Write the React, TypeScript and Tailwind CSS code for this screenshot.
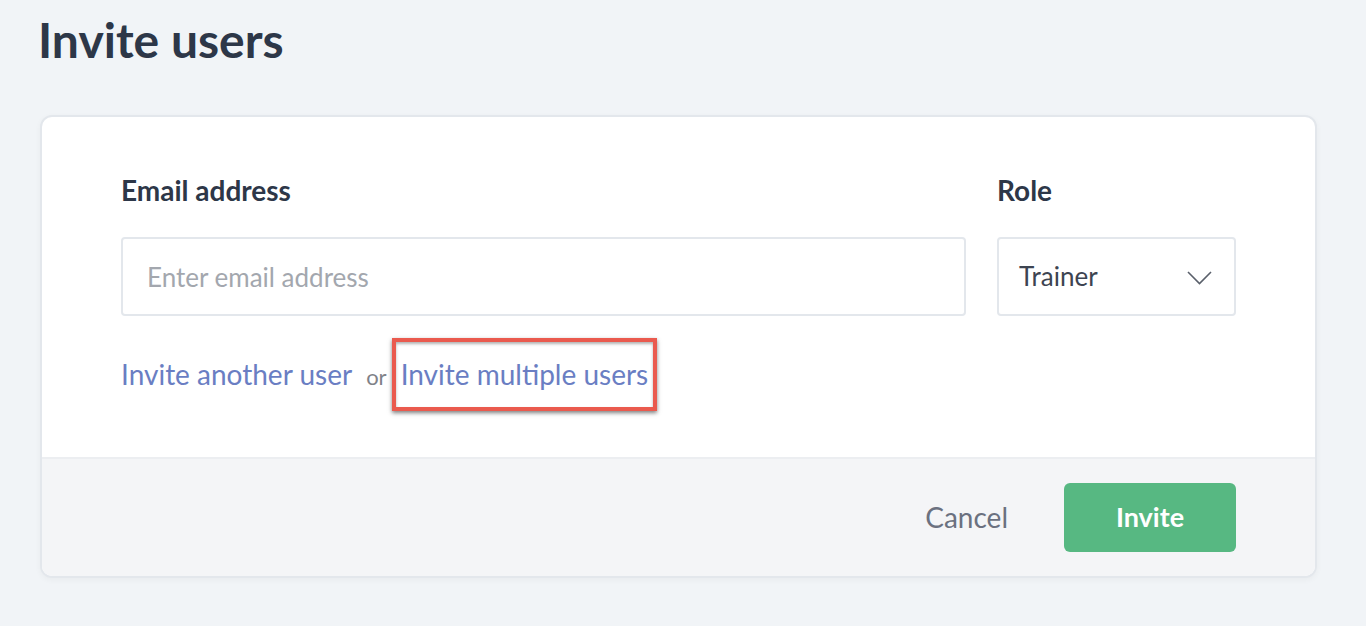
export default function App() {
  return (
    <div className="min-h-screen bg-[#f1f4f7] pt-[11px] pr-[49px] pl-[40px] font-['Lato','Noto_Sans',sans-serif]">
      <h1 className="-ml-[2px] text-[48px] font-bold leading-[1.2] text-[#2d3748]">Invite users</h1>

      <div className="mt-[46px] overflow-hidden rounded-[12px] border-2 border-[#e3e7ec] bg-white shadow-[0_2px_6px_rgba(0,0,0,0.04)]">
        <div className="pt-[57px] pr-[79px] pb-[65px] pl-[79px]">
          <div className="flex gap-[31px]">
            <div className="flex flex-1 flex-col">
              <label className="text-[28px] font-bold leading-[1.2] text-[#2d3748]">Email address</label>
              <input
                className="mt-[30px] h-[79px] rounded-[4px] border-2 border-[#e3e7ec] px-[24px] text-[26px] text-[#3d4451] outline-none placeholder:text-[#a3a7ae]"
                placeholder="Enter email address"
              />
            </div>
            <div className="flex w-[239px] flex-col">
              <label className="text-[28px] font-bold leading-[1.2] text-[#2d3748]">Role</label>
              <div className="mt-[30px] flex h-[79px] items-center justify-between rounded-[4px] border-2 border-[#e3e7ec] pr-[22px] pl-[20px]">
                <span className="text-[26px] text-[#3d4451]">Trainer</span>
                <svg width="25" height="14" viewBox="0 0 25 14" fill="none" className="mt-[2px]">
                  <polyline points="1,1 12.5,12.5 24,1" stroke="#5a606b" strokeWidth="1.6" />
                </svg>
              </div>
            </div>
          </div>

          <div className="mt-[42px] flex items-baseline text-[28px] leading-[1.2]">
            <a className="text-[#6a7ec3]">Invite another user</a>
            <span className="mx-[14px] text-[22px] text-[#7f8288]">or</span>
            <span className="relative">
              <a className="text-[#6a7ec3]">Invite multiple users</a>
              <span className="absolute -top-[20px] -right-[9px] -bottom-[19px] -left-[9px] border-[4px] border-[#ea5a4e] shadow-[0_2px_4px_rgba(0,0,0,0.5),inset_0_2px_3px_rgba(0,0,0,0.3)]" />
            </span>
          </div>
        </div>

        <div className="flex h-[119px] items-center justify-end border-t-2 border-[#eceef1] bg-[#f4f5f7] pr-[79px]">
          <button className="mr-[56px] text-[28px] text-[#6b7180]">Cancel</button>
          <button className="h-[69px] w-[172px] rounded-[6px] bg-[#57b882] text-[27px] font-bold text-white">Invite</button>
        </div>
      </div>
    </div>
  )
}
